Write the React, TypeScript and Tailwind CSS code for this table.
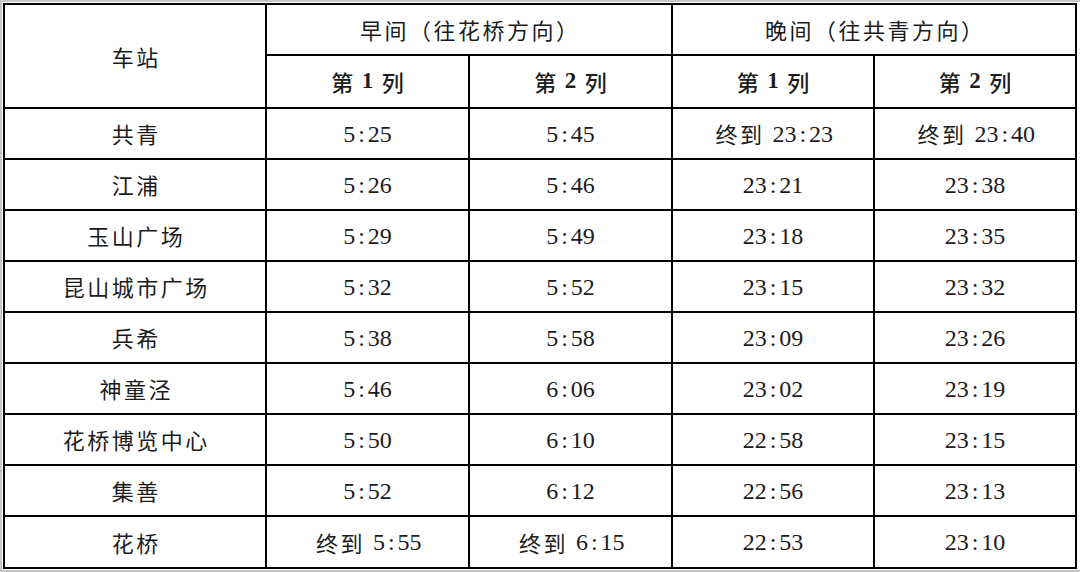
const rows: [string, string, string, string, string][] = [
  ["共青", "5:25", "5:45", "终到 23:23", "终到 23:40"],
  ["江浦", "5:26", "5:46", "23:21", "23:38"],
  ["玉山广场", "5:29", "5:49", "23:18", "23:35"],
  ["昆山城市广场", "5:32", "5:52", "23:15", "23:32"],
  ["兵希", "5:38", "5:58", "23:09", "23:26"],
  ["神童泾", "5:46", "6:06", "23:02", "23:19"],
  ["花桥博览中心", "5:50", "6:10", "22:58", "23:15"],
  ["集善", "5:52", "6:12", "22:56", "23:13"],
  ["花桥", "终到 5:55", "终到 6:15", "22:53", "23:10"],
];

const cjk = "font-['Noto_Sans_CJK_SC',sans-serif] text-[22px] tracking-[2.5px] pl-[2.5px]";

const Time = ({ value }: { value: string }) => {
  const parts = value.split(" ");
  const time = parts[parts.length - 1];
  const [h, m] = time.split(":");
  return (
    <span className="flex items-center">
      {parts.length > 1 && <span className={cjk + " mr-[8px]"}>{parts[0]}</span>}
      <span className="font-['Liberation_Serif',serif] text-[24px] leading-none">
        {h}
        <span className="mx-[3px]">:</span>
        {m}
      </span>
    </span>
  );
};

const Cell = ({ children, className = "" }: { children: React.ReactNode; className?: string }) => (
  <div className={"bg-white flex items-center justify-center text-[#1c1c1c] " + className}>
    {children}
  </div>
);

const ColHead = ({ n }: { n: string }) => (
  <span className="flex items-center font-medium">
    <span className={cjk}>第</span>
    <span className="font-['Liberation_Serif',serif] font-bold text-[23px] mx-[6px]">{n}</span>
    <span className={cjk}>列</span>
  </span>
);

export default function App() {
  return (
    <div className="w-[1080px] h-[572px] bg-white border-l-2 border-t-2 border-b-2 border-[#c6c6c6] pl-[1px] pt-[1px] pb-[1px]">
      <div className="w-[1074px] h-[566px] bg-black p-[2px] grid gap-[2px] grid-cols-[260px_201px_201px_200px_200px] grid-rows-[49px_51px_repeat(8,49px)_50px]">
        <Cell className="row-span-2">
          <span className={cjk}>车站</span>
        </Cell>
        <Cell className="col-span-2">
          <span className={cjk}>早间（往花桥方向）</span>
        </Cell>
        <Cell className="col-span-2">
          <span className={cjk}>晚间（往共青方向）</span>
        </Cell>
        <Cell><ColHead n="1" /></Cell>
        <Cell><ColHead n="2" /></Cell>
        <Cell><ColHead n="1" /></Cell>
        <Cell><ColHead n="2" /></Cell>
        {rows.map((r) => (
          <>
            <Cell key={r[0]}>
              <span className={cjk}>{r[0]}</span>
            </Cell>
            {r.slice(1).map((t, i) => (
              <Cell key={r[0] + i}>
                <Time value={t} />
              </Cell>
            ))}
          </>
        ))}
      </div>
    </div>
  );
}
